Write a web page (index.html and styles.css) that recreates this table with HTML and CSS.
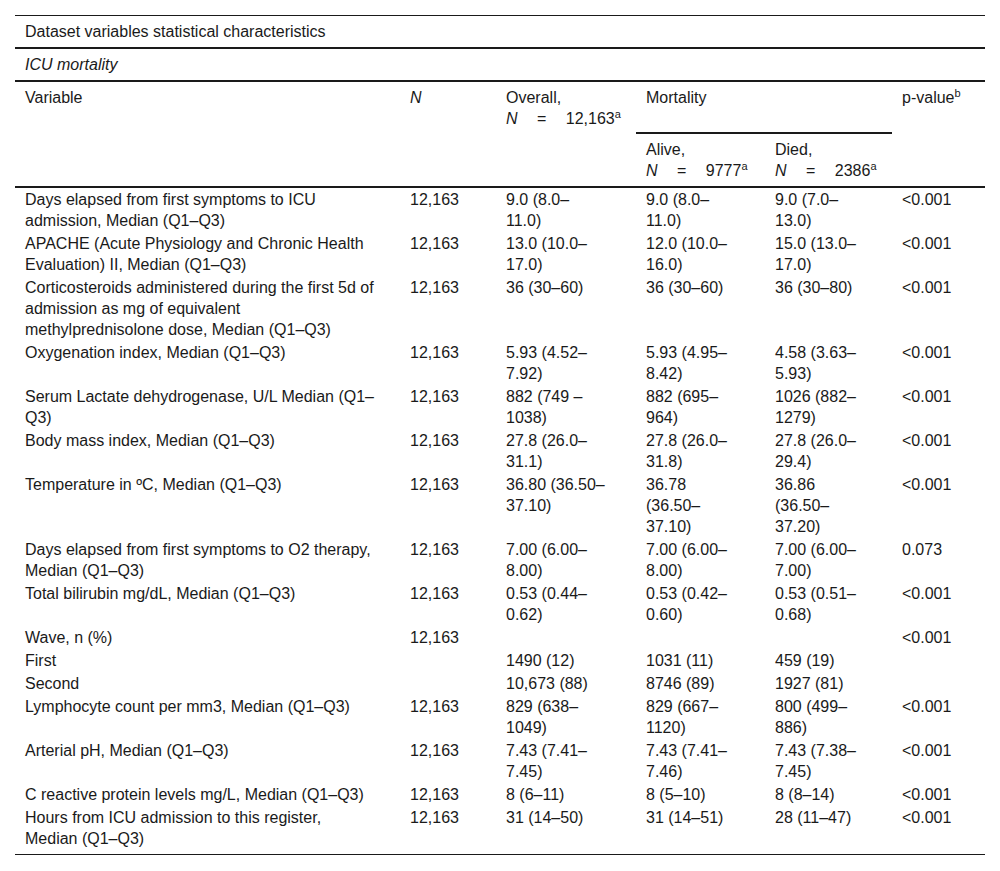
FILE: index.html
```html
<!DOCTYPE html>
<html lang="en">
<head>
<meta charset="utf-8">
<title>Dataset variables statistical characteristics</title>
<link rel="stylesheet" href="styles.css">
</head>
<body>
<div class="page">
<table class="stats">
  <colgroup>
    <col class="c-var"><col class="c-n"><col class="c-overall"><col class="c-alive"><col class="c-died"><col class="c-p">
  </colgroup>
  <thead>
    <tr class="cap-row"><th colspan="6" class="cap">Dataset variables statistical characteristics</th></tr>
    <tr class="sub-row"><th colspan="6" class="sub"><i>ICU mortality</i></th></tr>
    <tr class="h1">
      <th rowspan="2">Variable</th>
      <th rowspan="2"><i>N</i></th>
      <th rowspan="2">Overall,<br><span class="eq"><i>N</i> = 12,163<sup>a</sup></span></th>
      <th colspan="2" class="mort">Mortality</th>
      <th rowspan="2">p-value<sup>b</sup></th>
    </tr>
    <tr class="h2">
      <th>Alive,<br><span class="eq"><i>N</i> = 9777<sup>a</sup></span></th>
      <th>Died,<br><span class="eq"><i>N</i> = 2386<sup>a</sup></span></th>
    </tr>
  </thead>
  <tbody>
    <tr><td>Days elapsed from first symptoms to ICU<br>admission, Median (Q1–Q3)</td><td>12,163</td><td>9.0 (8.0–<br>11.0)</td><td>9.0 (8.0–<br>11.0)</td><td>9.0 (7.0–<br>13.0)</td><td>&lt;0.001</td></tr>
    <tr><td>APACHE (Acute Physiology and Chronic Health<br>Evaluation) II, Median (Q1–Q3)</td><td>12,163</td><td>13.0 (10.0–<br>17.0)</td><td>12.0 (10.0–<br>16.0)</td><td>15.0 (13.0–<br>17.0)</td><td>&lt;0.001</td></tr>
    <tr><td>Corticosteroids administered during the first 5d of<br>admission as mg of equivalent<br>methylprednisolone dose, Median (Q1–Q3)</td><td>12,163</td><td>36 (30–60)</td><td>36 (30–60)</td><td>36 (30–80)</td><td>&lt;0.001</td></tr>
    <tr><td>Oxygenation index, Median (Q1–Q3)</td><td>12,163</td><td>5.93 (4.52–<br>7.92)</td><td>5.93 (4.95–<br>8.42)</td><td>4.58 (3.63–<br>5.93)</td><td>&lt;0.001</td></tr>
    <tr><td>Serum Lactate dehydrogenase, U/L Median (Q1–<br>Q3)</td><td>12,163</td><td>882 (749 –<br>1038)</td><td>882 (695–<br>964)</td><td>1026 (882–<br>1279)</td><td>&lt;0.001</td></tr>
    <tr><td>Body mass index, Median (Q1–Q3)</td><td>12,163</td><td>27.8 (26.0–<br>31.1)</td><td>27.8 (26.0–<br>31.8)</td><td>27.8 (26.0–<br>29.4)</td><td>&lt;0.001</td></tr>
    <tr><td>Temperature in ºC, Median (Q1–Q3)</td><td>12,163</td><td>36.80 (36.50–<br>37.10)</td><td>36.78<br>(36.50–<br>37.10)</td><td>36.86<br>(36.50–<br>37.20)</td><td>&lt;0.001</td></tr>
    <tr><td>Days elapsed from first symptoms to O2 therapy,<br>Median (Q1–Q3)</td><td>12,163</td><td>7.00 (6.00–<br>8.00)</td><td>7.00 (6.00–<br>8.00)</td><td>7.00 (6.00–<br>7.00)</td><td>0.073</td></tr>
    <tr><td>Total bilirubin mg/dL, Median (Q1–Q3)</td><td>12,163</td><td>0.53 (0.44–<br>0.62)</td><td>0.53 (0.42–<br>0.60)</td><td>0.53 (0.51–<br>0.68)</td><td>&lt;0.001</td></tr>
    <tr><td>Wave, n (%)</td><td>12,163</td><td></td><td></td><td></td><td>&lt;0.001</td></tr>
    <tr><td>First</td><td></td><td>1490 (12)</td><td>1031 (11)</td><td>459 (19)</td><td></td></tr>
    <tr><td>Second</td><td></td><td>10,673 (88)</td><td>8746 (89)</td><td>1927 (81)</td><td></td></tr>
    <tr><td>Lymphocyte count per mm3, Median (Q1–Q3)</td><td>12,163</td><td>829 (638–<br>1049)</td><td>829 (667–<br>1120)</td><td>800 (499–<br>886)</td><td>&lt;0.001</td></tr>
    <tr><td>Arterial pH, Median (Q1–Q3)</td><td>12,163</td><td>7.43 (7.41–<br>7.45)</td><td>7.43 (7.41–<br>7.46)</td><td>7.43 (7.38–<br>7.45)</td><td>&lt;0.001</td></tr>
    <tr><td>C reactive protein levels mg/L, Median (Q1–Q3)</td><td>12,163</td><td>8 (6–11)</td><td>8 (5–10)</td><td>8 (8–14)</td><td>&lt;0.001</td></tr>
    <tr class="last"><td>Hours from ICU admission to this register,<br>Median (Q1–Q3)</td><td>12,163</td><td>31 (14–50)</td><td>31 (14–51)</td><td>28 (11–47)</td><td>&lt;0.001</td></tr>
  </tbody>
</table>
</div>
</body>
</html>
```

FILE: styles.css
```css
html, body {
  margin: 0;
  padding: 0;
  background: #ffffff;
}

.page {
  padding: 15px 15px 0 15px;
}

.stats {
  width: 970px;
  table-layout: fixed;
  border-collapse: collapse;
  font-family: "Liberation Sans", Arial, sans-serif;
  font-size: 16px;
  line-height: 21px;
  color: #1a1a1a;
  border-bottom: 1px solid #1a1a1a;
}

.c-var { width: 385px; }
.c-n { width: 96px; }
.c-overall { width: 140px; }
.c-alive { width: 129px; }
.c-died { width: 127px; }
.c-p { width: 93px; }

.stats th,
.stats td {
  text-align: left;
  vertical-align: top;
  font-weight: normal;
  white-space: nowrap;
  padding: 1px 10px;
}

.stats th.cap {
  border-top: 1px solid #1a1a1a;
  border-bottom: 2px solid #1a1a1a;
  padding: 5px 10px 5px 10px;
}

.stats th.sub {
  border-bottom: 2px solid #1a1a1a;
  padding: 5px 10px 5px 10px;
}

.stats .h1 th,
.stats .h2 th {
  padding: 5px 10px;
}

.stats .h1 { height: 52px; }
.stats .h2 { height: 54px; }

.stats .h2 th,
.stats .h1 th[rowspan] {
  border-bottom: 2px solid #1a1a1a;
}

.stats th.mort {
  border-bottom: 2px solid #1a1a1a;
}

.eq {
  word-spacing: 15px;
}

.stats sup {
  font-size: 11px;
  line-height: 0;
  vertical-align: 6px;
  word-spacing: 0;
}

.stats tr.last td {
  padding-bottom: 5px;
}
```
